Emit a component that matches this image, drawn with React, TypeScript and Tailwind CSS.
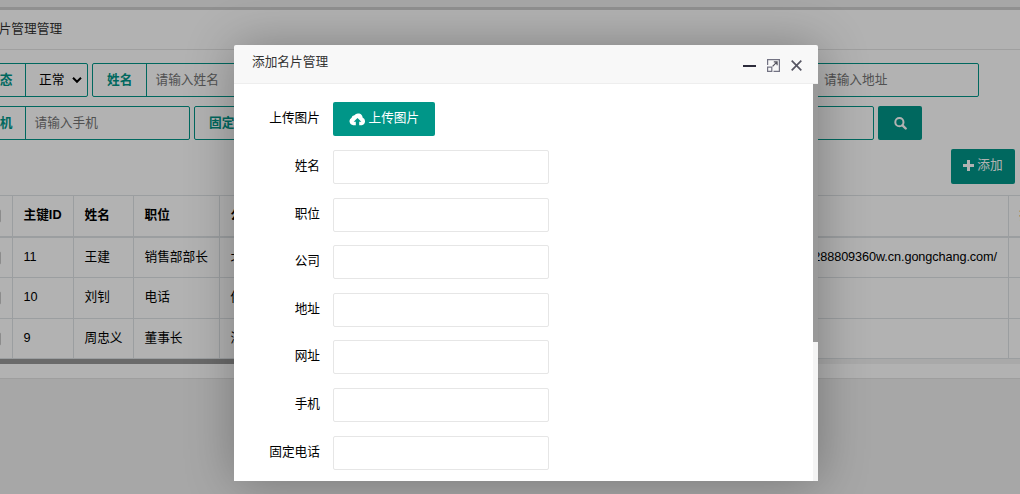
import React from 'react'

const fields = ['姓名', '职位', '公司', '地址', '网址', '手机', '固定电话']

const rows = [
  { id: '11', name: '王建', job: '销售部部长', company: '北京', url: 'http://288809360w.cn.gongchang.com/' },
  { id: '10', name: '刘钊', job: '电话', company: '佛山', url: '' },
  { id: '9', name: '周忠义', job: '董事长', company: '深圳', url: '' },
]

const Group = ({ label, className, labelClass, children }: {
  label: string
  className: string
  labelClass: string
  children?: React.ReactNode
}) => (
  <div className={`flex shrink-0 h-[34px] border border-[#009688] rounded-[2px] leading-[32px] overflow-hidden ${className}`}>
    <div className={`shrink-0 border-r border-[#009688] text-[#009688] font-bold whitespace-nowrap ${labelClass}`}>
      {label}
    </div>
    <div className="flex-1 whitespace-nowrap text-[#757575]">{children}</div>
  </div>
)

const SearchBar = () => (
  <div className="w-[1100px] -ml-10 pt-[13px]">
    <div className="flex gap-1">
      <Group label="状态" className="w-[128px]" labelClass="w-[65px] pl-[26px]">
        <div className="flex items-center justify-between pl-[13px] pr-[5px] text-black">
          正常
          <svg width="10" height="8" viewBox="0 0 10 8" fill="none" stroke="currentColor" strokeWidth="2">
            <path d="M1 1.8l4 4 4-4" />
          </svg>
        </div>
      </Group>
      <Group label="姓名" className="w-[218px]" labelClass="w-[54px] pl-[14px]">
        <span className="pl-[8.5px]">请输入姓名</span>
      </Group>
      <Group label="职位" className="w-[218px]" labelClass="w-[54px] pl-[14px]" />
      <Group label="公司" className="w-[221px]" labelClass="w-[54px] pl-[14px]" />
      <Group label="地址" className="w-[218px]" labelClass="w-[54px] pl-[14px]">
        <span className="pl-[8px]">请输入地址</span>
      </Group>
    </div>
    <div className="flex gap-1 mt-[9px]">
      <Group label="手机" className="w-[230px]" labelClass="w-[65px] pl-[26px]">
        <span className="pl-[8.5px]">请输入手机</span>
      </Group>
      <Group label="固定电话" className="w-[244px]" labelClass="w-[80px] pl-[14px]" />
      <Group label="邮箱" className="w-[432px]" labelClass="w-[54px] pl-[14px]" />
      <button type="button" className="flex items-center justify-center w-[44px] h-[34px] rounded-[2px] bg-[#009688] text-white">
        <svg width="13" height="13" viewBox="0 0 13 13" fill="none" stroke="currentColor">
          <circle cx="5.4" cy="5.2" r="4.1" strokeWidth="2" />
          <path d="M8.5 8.3l3.2 3.2" strokeWidth="2.4" strokeLinecap="round" />
        </svg>
      </button>
    </div>
  </div>
)

const Modal = () => (
  <div className="absolute left-[234px] top-[45px] w-[584px] h-[436px] flex flex-col rounded-[2px] shadow-[1px_1px_50px_rgba(0,0,0,0.3)]">
    <header className="h-[39px] shrink-0 flex items-center justify-between border-b border-[#eee] bg-[#f8f8f8] rounded-t-[2px] pl-[18px] pr-[15px] text-[#333]">
      <h2 className="-mt-[2px]">添加名片管理</h2>
      <div className="flex items-center text-[#2d2c3b] mt-[2px]">
        <span className="w-[13px] h-[2px] bg-[#2d2c3b] mt-[2px]" />
        <svg className="ml-[11px]" width="13" height="13" viewBox="0 0 13 13" fill="none" stroke="#737383">
          <path d="M.6 6V.6h11.8v11.8H6.5" strokeWidth="1.2" />
          <path d="M.6 8.2h4.2v4.2H.6z" strokeWidth="1.2" />
          <path d="M5.6 7.4l4.2-4.2M6.8 2.9h3.3v3.3" strokeWidth="1.2" stroke="#55545f" />
        </svg>
        <svg className="ml-[11px] mr-[1px]" width="11" height="11" viewBox="0 0 11 11" fill="none" stroke="#565562" strokeWidth="1.7">
          <path d="M.7.7l9.6 9.6M10.3.7L.7 10.3" />
        </svg>
      </div>
    </header>
    <div className="flex flex-1 min-h-0">
      <form className="flex-1 bg-white pt-[18px] overflow-hidden text-black">
        <div className="flex h-[34px]">
          <label className="w-[86px] text-right leading-[33px]">上传图片</label>
          <button type="button" className="ml-[13px] w-[102px] h-[34px] flex items-center pl-4 pb-px rounded-[2px] bg-[#009688] text-white whitespace-nowrap">
            <svg className="mt-[2px] mr-[2.5px] shrink-0" width="17" height="13" viewBox="0 0 17 13" fill="currentColor">
              <path d="M4.3 12.2A4 4 0 0 1 2.6 4.7 3 3 0 0 1 5.4 2.2 4.6 4.6 0 0 1 13.6 4.6a4 4 0 0 1-.8 7.6H10.2V8.8h2.1L8.5 5 4.7 8.8h2.1v3.4z" />
            </svg>
            上传图片
          </button>
        </div>
        <div className="flex flex-col gap-[13.6px] mt-[14px]">
          {fields.map((field) => (
            <div key={field} className="flex shrink-0 h-[34px]">
              <label className="w-[86px] text-right leading-[33px]">{field}</label>
              <input className="ml-[13px] w-[216px] h-[34px] border border-[#e6e6e6] rounded-[2px] bg-white outline-none" />
            </div>
          ))}
        </div>
      </form>
      <div className="w-[5px] bg-[#f4f4f4]">
        <div className="h-[258px] bg-[#999]" />
      </div>
    </div>
  </div>
)

const App = () => {
  return (
    <div className="relative w-[1020px] h-[494px] overflow-hidden bg-[#f0f0f0] text-[12.7px] text-black font-['Liberation_Sans','Noto_Sans_CJK_SC',sans-serif]">
      <div className="h-[10px] border-b-3 border-[#cecece]" />
      <div className="h-[369px] bg-white border-b border-[#e2e2e2]">
        <div className="h-[40px] border-b border-[#e4e4e4] leading-[38px] text-[#333] whitespace-nowrap">
          <span className="-ml-[14px]">名片管理管理</span>
        </div>
        <SearchBar />
        <div className="flex justify-end pr-[5px] mt-[9px]">
          <button type="button" className="flex items-center justify-center w-[64px] h-[35px] pb-px rounded-[2px] bg-[#009688] text-white">
            <svg className="mr-[3px] mb-px" width="11" height="11" viewBox="0 0 11 11" fill="currentColor">
              <path d="M4 0h3v4h4v3H7v4H4V7H0V4h4z" />
            </svg>
            添加
          </button>
        </div>
        <div className="mt-[11px] overflow-hidden">
          <table className="w-[1107px] -ml-[27px] table-fixed border-separate border-spacing-0 text-left whitespace-nowrap [&_td]:overflow-hidden [&_td]:border-r [&_td]:border-b [&_td]:border-[#dee2e6] [&_td]:pl-[10.5px] [&_th]:overflow-hidden [&_th]:border-r [&_th]:border-b-2 [&_th]:border-t [&_th]:border-[#dee2e6] [&_th]:pl-[10.5px] [&_th]:font-bold">
            <colgroup>
              <col className="w-[40px]" />
              <col className="w-[61px]" />
              <col className="w-[60px]" />
              <col className="w-[86px]" />
              <col className="w-[542px]" />
              <col className="w-[247px]" />
              <col className="w-[71px]" />
            </colgroup>
            <thead>
              <tr className="h-[43px]">
                <th><span className="block w-[17px] h-[14px] border border-[#c9c9c9] rounded-[2px]" /></th>
                <th>主键ID</th>
                <th>姓名</th>
                <th>职位</th>
                <th>公司</th>
                <th></th>
                <th>操作</th>
              </tr>
            </thead>
            <tbody>
              {rows.map((row) => (
                <tr key={row.id} className="h-[40px] nth-[2]:h-[41px]">
                  <td><span className="block w-[17px] h-[14px] border border-[#c9c9c9] rounded-[2px]" /></td>
                  <td>{row.id}</td>
                  <td>{row.name}</td>
                  <td>{row.job}</td>
                  <td className="border-r-0!">{row.company}</td>
                  <td><div className="flex justify-end pr-[11px] tracking-[-0.09px]">{row.url}</div></td>
                  <td></td>
                </tr>
              ))}
            </tbody>
          </table>
          <div className="h-[5px] bg-[#f3f3f3]">
            <div className="w-[700px] h-full bg-[#999]" />
          </div>
        </div>
      </div>
      <div className="absolute inset-0 bg-black/30" />
      <Modal />
    </div>
  )
}

export default App
